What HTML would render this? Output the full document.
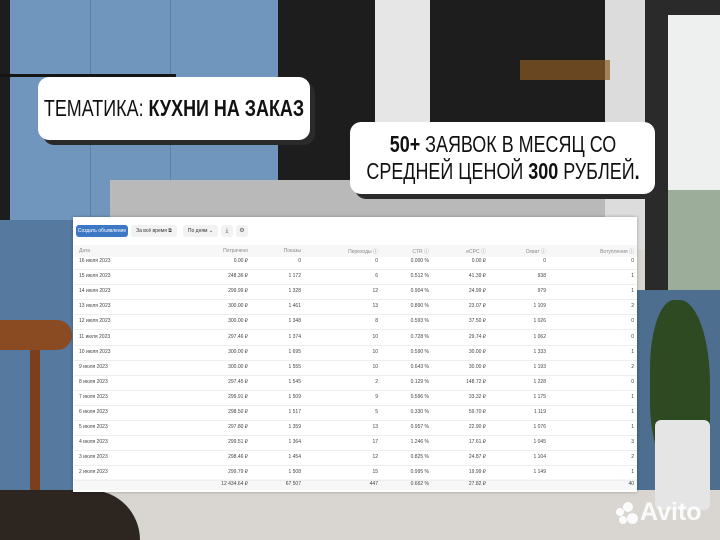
<!DOCTYPE html>
<html><head><meta charset="utf-8"><style>
*{margin:0;padding:0;box-sizing:border-box}
body{width:720px;height:540px;overflow:hidden;position:relative;background:#d9d5d0;font-family:"Liberation Sans",sans-serif}
.a{position:absolute}
.box{position:absolute;background:#fff;border-radius:11px;box-shadow:5px 5px 0 #2a2a2a;color:#111;text-align:center}
.box .in{position:absolute;left:50%;white-space:nowrap;transform:translateX(-50%) scaleX(0.78);text-align:center}
.t{position:absolute;font-size:5px;color:#444;white-space:nowrap}
.r{text-align:right}
.hl{position:absolute;left:74px;width:563px;height:1px;background:#eee}
</style></head><body>
<div class="a" style="left:0;top:0;width:720px;height:250px;background:#1d1d1d"></div>
<div class="a" style="left:10px;top:0;width:268px;height:240px;background:#7096bd"></div>
<div class="a" style="left:90px;top:0;width:1px;height:240px;background:#5d80a6"></div>
<div class="a" style="left:170px;top:0;width:1px;height:240px;background:#5d80a6"></div>
<div class="a" style="left:0;top:74px;width:176px;height:3px;background:#151515"></div>
<div class="a" style="left:375px;top:0;width:55px;height:122px;background:#e6e6e6"></div>
<div class="a" style="left:110px;top:180px;width:500px;height:40px;background:#b9b9b9"></div>
<div class="a" style="left:605px;top:0;width:40px;height:250px;background:#dcdcdc"></div>
<div class="a" style="left:645px;top:0;width:75px;height:300px;background:#2a2a2a"></div>
<div class="a" style="left:668px;top:15px;width:52px;height:280px;background:#eef0f0"></div>
<div class="a" style="left:668px;top:190px;width:52px;height:100px;background:#9cae9a"></div>
<div class="a" style="left:0;top:220px;width:80px;height:270px;background:#55799f"></div>
<div class="a" style="left:637px;top:290px;width:83px;height:200px;background:#4d6e8f"></div>
<div class="a" style="left:650px;top:300px;width:60px;height:170px;background:#2e4a22;border-radius:40% 50% 30% 40%"></div>
<div class="a" style="left:655px;top:420px;width:55px;height:90px;background:#e5e5e5;border-radius:6px"></div>
<div class="a" style="left:0;top:320px;width:72px;height:30px;background:#8a4a22;border-radius:0 20px 20px 0"></div>
<div class="a" style="left:30px;top:350px;width:10px;height:140px;background:#7a3f1c"></div>
<div class="a" style="left:0;top:490px;width:140px;height:50px;background:#2d2520;border-radius:0 60px 0 0"></div>
<div class="a" style="left:520px;top:60px;width:90px;height:20px;background:#8a5a22;opacity:.7"></div>
<div class="box" style="left:38px;top:77px;width:272px;height:63px;font-size:23px"><div class="in" style="top:18px">ТЕМАТИКА: <b>КУХНИ НА ЗАКАЗ</b></div></div>
<div class="box" style="left:350px;top:122px;width:305px;height:72px;font-size:23px;line-height:27px"><div class="in" style="top:9px"><b>50+</b> ЗАЯВОК В МЕСЯЦ СО<br>СРЕДНЕЙ ЦЕНОЙ <b>300</b> РУБЛЕЙ<b>.</b></div></div>
<div class="a" style="left:73px;top:217px;width:564px;height:275px;background:#fff;box-shadow:0 0 3px rgba(0,0,0,.3)"></div>
<div class="a" style="left:76px;top:225px;width:52px;height:12px;background:#3d78c4;border-radius:3px;color:#fff;font-size:5px;line-height:12px;text-align:center">Создать объявление</div>
<div class="a" style="left:131px;top:225px;width:46px;height:12px;background:#f2f2f2;border-radius:3px;color:#333;font-size:5px;line-height:12px;text-align:center">За всё время ⧉</div>
<div class="a" style="left:183px;top:225px;width:35px;height:12px;background:#f2f2f2;border-radius:3px;color:#333;font-size:5px;line-height:12px;text-align:center">По дням ⌄</div>
<div class="a" style="left:221px;top:225px;width:12px;height:12px;background:#f2f2f2;border-radius:3px;color:#555;font-size:6px;line-height:12px;text-align:center">⤓</div>
<div class="a" style="left:236px;top:225px;width:12px;height:12px;background:#f2f2f2;border-radius:3px;color:#555;font-size:6px;line-height:12px;text-align:center">⚙</div>
<div class="a" style="left:74px;top:245px;width:563px;height:12px;background:#f7f7f7"></div>
<div class="a" style="left:74px;top:479px;width:563px;height:11px;background:#f7f7f7"></div>
<div id="tb"></div>
<div class="a" style="left:616px;top:508px;width:8px;height:8px;border-radius:50%;background:#fff;opacity:.9"></div>
<div class="a" style="left:623px;top:502px;width:10px;height:10px;border-radius:50%;background:#fff;opacity:.9"></div>
<div class="a" style="left:619px;top:516px;width:8px;height:8px;border-radius:50%;background:#fff;opacity:.9"></div>
<div class="a" style="left:627px;top:513px;width:11px;height:11px;border-radius:50%;background:#fff;opacity:.9"></div>
<div class="a" style="left:640px;top:498px;font-size:25px;color:#fff;font-weight:bold;opacity:.9">Avito</div>
<script>
var rows=[["16 июля 2023","0.00 ₽","0","0","0.000 %","0.00 ₽","0","0"],
["15 июля 2023","248.36 ₽","1 172","6","0.512 %","41.39 ₽","938","1"],
["14 июля 2023","299.99 ₽","1 328","12","0.904 %","24.99 ₽","979","1"],
["13 июля 2023","300.00 ₽","1 461","13","0.890 %","23.07 ₽","1 109","2"],
["12 июля 2023","300.00 ₽","1 348","8","0.593 %","37.50 ₽","1 026","0"],
["11 июля 2023","297.46 ₽","1 374","10","0.728 %","29.74 ₽","1 062","0"],
["10 июля 2023","300.00 ₽","1 695","10","0.590 %","30.00 ₽","1 333","1"],
["9 июля 2023","300.00 ₽","1 555","10","0.643 %","30.00 ₽","1 193","2"],
["8 июля 2023","297.45 ₽","1 545","2","0.129 %","148.72 ₽","1 228","0"],
["7 июля 2023","299.91 ₽","1 509","9","0.596 %","33.32 ₽","1 175","1"],
["6 июля 2023","298.50 ₽","1 517","5","0.330 %","59.70 ₽","1 119","1"],
["5 июля 2023","297.80 ₽","1 359","13","0.957 %","22.90 ₽","1 076","1"],
["4 июля 2023","299.51 ₽","1 364","17","1.246 %","17.61 ₽","1 045","3"],
["3 июля 2023","298.46 ₽","1 454","12","0.825 %","24.87 ₽","1 104","2"],
["2 июля 2023","299.79 ₽","1 508","15","0.995 %","19.99 ₽","1 149","1"]];
var hd=["Дата","Потрачено","Показы","Переходы ⓘ","CTR ⓘ","eCPC ⓘ","Охват ⓘ","Вотупления ⓘ"];
var rx=[0,248,301,378,429,486,546,634];
var h="";
function line(c,y,col){for(var i=0;i<8;i++){if(i==0)h+='<div class="t" style="left:79px;top:'+y+'px;color:'+col+'">'+c[i]+'</div>';else h+='<div class="t r" style="right:'+(720-rx[i])+'px;top:'+y+'px;color:'+col+'">'+c[i]+'</div>';}}
line(hd,248,"#888");
for(var k=0;k<rows.length;k++){var y=258+k*15.1;line(rows[k],y,"#444");h+='<div class="hl" style="top:'+(y+11)+'px"></div>';}
line(["","12 434.64 ₽","67 507","447","0.662 %","27.82 ₽","","40"],481,"#444");
document.getElementById("tb").innerHTML=h;
</script>
</body></html>
